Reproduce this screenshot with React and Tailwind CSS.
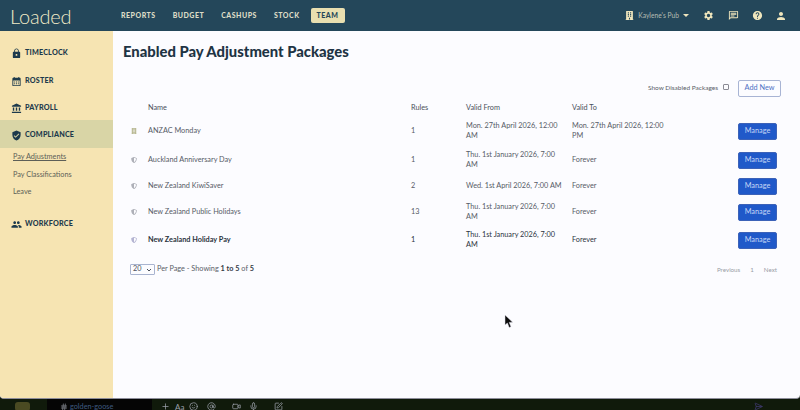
import React from "react";
import { MdLock, MdCalendarMonth, MdAccountBalance, MdVerifiedUser, MdPeople, MdSettings, MdHelp, MdPerson, MdOutlineChat } from "react-icons/md";
import { FaShieldAlt, FaBuilding } from "react-icons/fa";
import { Plus, AtSign, Smile, Video, Mic, SquarePen, Hash, SendHorizontal } from "lucide-react";

const F = { fontFamily: 'Lato, "Open Sans", sans-serif' };

function SideItem({ icon: Icon, label, active, cls = "" }) {
  return (
    <div className={`flex h-[28px] items-center gap-[3px] pl-[11px] pt-[2px] ${active ? "bg-[#d9d5a6]" : ""} ${cls}`}>
      <Icon size={11} className="text-[#1d3a4c]" />
      <span className="text-[7.2px] font-black tracking-[0.2px] text-[#1d3a4c]">{label}</span>
    </div>
  );
}

const rows = [
  { name: "ANZAC Monday", rules: "1", from: "Mon. 27th April 2026, 12:00 AM", to: "Mon. 27th April 2026, 12:00 PM", h: "h-[32px]", icon: FaBuilding, ic: "text-[#b9b994]" },
  { name: "Auckland Anniversary Day", rules: "1", from: "Thu. 1st January 2026, 7:00 AM", to: "Forever", h: "h-[26px]", icon: FaShieldAlt, ic: "text-[#aeb0b8]" },
  { name: "New Zealand KiwiSaver", rules: "2", from: "Wed. 1st April 2026, 7:00 AM", to: "Forever", h: "h-[26px]", icon: FaShieldAlt, ic: "text-[#aeb0b8]" },
  { name: "New Zealand Public Holidays", rules: "13", from: "Thu. 1st January 2026, 7:00 AM", to: "Forever", h: "h-[26px]", icon: FaShieldAlt, ic: "text-[#aeb0b8]" },
  { name: "New Zealand Holiday Pay", rules: "1", from: "Thu. 1st January 2026, 7:00 AM", to: "Forever", h: "h-[30px]", icon: FaShieldAlt, ic: "text-[#b4b4d2]", dark: true },
];

function Row({ r }) {
  const tc = r.dark ? "text-[#2b3340]" : "text-[#565b66]";
  return (
    <div className={`grid grid-cols-[19px_263px_55px_106px_110px_1fr] items-center text-[7.3px] leading-[10px] ${tc} ${r.h}`}>
      <r.icon size={6} className={`ml-[2px] ${r.ic}`} />
      <span className={r.dark ? "font-bold" : ""}>{r.name}</span>
      <span>{r.rules}</span>
      <span className="pr-[6px]">{r.from}</span>
      <span className="pr-[12px]">{r.to}</span>
      <button className="mr-[4px] ml-auto h-[17px] w-[39px] rounded-[2px] border border-[#3c62b8] bg-[#2059c9] text-[7.3px] text-[#c6d8f7]">Manage</button>
    </div>
  );
}

export default function App() {
  return (
    <div style={F} className="flex h-[410px] w-[800px] flex-col overflow-hidden bg-[#101a0b]">
      <div className="flex h-[399px] flex-col overflow-hidden rounded-b-[4px] border-b border-[#8d8d9a] bg-[#fcfcff]">
        <header className="flex h-[31px] shrink-0 items-center bg-[#24475a] pl-[10px] pr-[13px]">
          <span className="w-[111px] text-[20px] font-light leading-none tracking-[-0.2px] text-[#f2ecc8]">Loaded</span>
          <nav className="flex items-center gap-[17px] text-[7px] font-black tracking-[0.5px] text-[#dcdcc6]">
            <span>REPORTS</span>
            <span>BUDGET</span>
            <span>CASHUPS</span>
            <span>STOCK</span>
            <span className="-ml-[6px] flex h-[15px] w-[34px] items-center justify-center rounded-[2px] bg-[#e9dfb0] text-[#24475a]">TEAM</span>
          </nav>
          <div className="ml-auto flex items-center text-[#efe6bd]">
            <FaBuilding size={9} />
            <span className="ml-[4px] text-[6.7px] text-[#b5bdb2]">Kaylene's Pub</span>
            <span className="ml-[4px] h-0 w-0 border-x-[3px] border-t-[3px] border-x-transparent border-t-[#efe6bd]" />
            <MdSettings size={11} className="ml-[14px]" />
            <MdOutlineChat size={11} className="ml-[14px]" />
            <MdHelp size={11} className="ml-[13px]" />
            <MdPerson size={12} className="ml-[12px]" />
          </div>
        </header>
        <div className="flex min-h-0 flex-1">
          <aside className="w-[113px] shrink-0 bg-[#f6e4b2] pt-[7px]">
            <SideItem icon={MdLock} label="TIMECLOCK" />
            <SideItem icon={MdCalendarMonth} label="ROSTER" />
            <SideItem icon={MdAccountBalance} label="PAYROLL" cls="-mt-[1px]" />
            <SideItem icon={MdVerifiedUser} label="COMPLIANCE" active cls="-mt-[1px]" />
            <div className="flex flex-col gap-[6.5px] pl-[13px] pt-[3px] text-[7.3px] leading-[11px] text-[#5d5f58]">
              <span className="underline">Pay Adjustments</span>
              <span>Pay Classifications</span>
              <span>Leave</span>
            </div>
            <SideItem icon={MdPeople} label="WORKFORCE" cls="mt-[12px]" />
          </aside>
          <main className="relative flex-1 pl-[10px] pr-[19px]">
            <h1 className="pt-[10px] text-[14.8px] font-black leading-[20px] text-[#1e3444]">Enabled Pay Adjustment Packages</h1>
            <div className="mt-[18px] flex h-[18px] items-center justify-end">
              <span className="text-[6.5px] text-[#5a5e68]">Show Disabled Packages</span>
              <span className="ml-[5px] mb-[3px] h-[6px] w-[6px] rounded-[1px] border border-[#8b8b95]" />
              <button className="ml-[9px] h-[17px] w-[43px] rounded-[2px] border border-[#a8b4d4] text-[7.3px] text-[#4f71c4]">Add New</button>
            </div>
            <div className="mt-[4px] pl-[6px]">
              <div className="grid h-[14px] grid-cols-[19px_263px_55px_106px_1fr] items-center text-[7.3px] text-[#4a505a]">
                <span />
                <span>Name</span>
                <span>Rules</span>
                <span>Valid From</span>
                <span>Valid To</span>
              </div>
              <div>
                {rows.map((r) => <Row key={r.name} r={r} />)}
              </div>
            </div>
            <div className="mt-[9px] flex items-center pl-[7px] text-[7.3px] text-[#5a5e68]">
              <div className="flex h-[11px] w-[25px] items-center justify-between rounded-[1px] border border-[#a9b4d0] px-[2px] text-[#4a505a]">
                <span>20</span>
                <svg width="6" height="4" viewBox="0 0 6 4" fill="none" stroke="#4a505a"><path d="M1 1l2 2 2-2" /></svg>
              </div>
              <span className="ml-[2px]">Per Page - Showing <b className="text-[#333a45]">1 to 5</b> of <b className="text-[#333a45]">5</b></span>
              <div className="ml-auto mr-[4px] flex gap-[10px] text-[6.2px] text-[#9a9da6]">
                <span>Previous</span>
                <span>1</span>
                <span>Next</span>
              </div>
            </div>
            <svg width="10" height="14" viewBox="0 0 10 14" className="absolute left-[391px] top-[284px]">
              <path d="M1 0 L1 10 L3.4 8 L5.2 12.6 L7 11.8 L5.2 7.4 L8.6 7.2 Z" fill="#0c0c0c" stroke="#dcdce8" strokeWidth="0.5" />
            </svg>
          </main>
        </div>
      </div>
      <div className="flex h-[11px] items-center overflow-hidden text-[#9a9fa8]">
        <div className="flex h-full w-[47px] shrink-0 items-center pl-[15px]">
          <div className="mt-[3px] h-[9px] w-[15px] rounded-[3px] bg-[#4a4a22]" />
        </div>
        <div className="flex h-full w-[105px] shrink-0 items-center bg-[#050505] pl-[13px] pt-[4px]">
          <Hash size={8} />
          <span className="ml-[2px] text-[7.3px] leading-none text-[#3f5a80]">golden-goose</span>
        </div>
        <div className="flex h-full flex-1 items-center pt-[4px]">
          <Plus size={9} className="ml-[9px]" />
          <span className="ml-[5px] text-[8px] leading-none">Aa</span>
          <Smile size={9} className="ml-[5px]" />
          <AtSign size={9} className="ml-[9px]" />
          <Video size={9} className="ml-[16px]" />
          <Mic size={9} className="ml-[8px]" />
          <SquarePen size={9} className="ml-[16px]" />
          <SendHorizontal size={9} className="ml-auto mr-[37px] text-[#3f3a70]" />
        </div>
      </div>
    </div>
  );
}
